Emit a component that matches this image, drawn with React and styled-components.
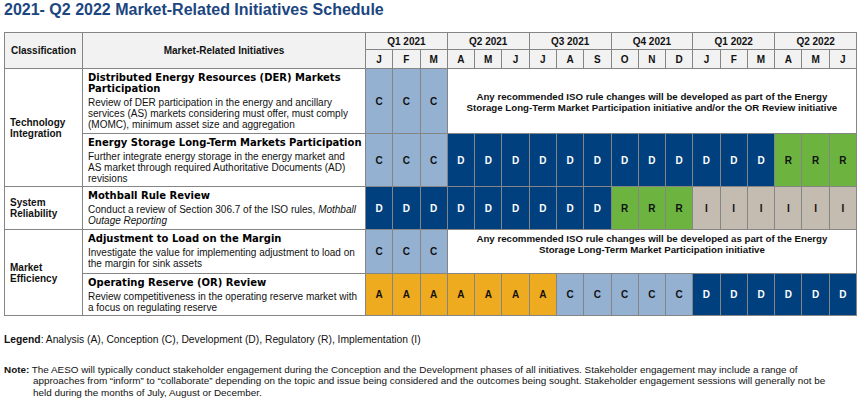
import React from 'react'
import styled, { createGlobalStyle } from 'styled-components'

const GlobalStyle = createGlobalStyle`
  body {
    margin: 0;
    background: #ffffff;
    font-family: "Liberation Sans", Arial, sans-serif;
    color: #111;
  }
`

const phaseColors = {
  A: { bg: '#efab1f', fg: '#111' },
  C: { bg: '#95b1d1', fg: '#111' },
  D: { bg: '#00407f', fg: '#ffffff' },
  R: { bg: '#6cb43f', fg: '#111' },
  I: { bg: '#c4bbb1', fg: '#111' },
}

const quarters = ['Q1 2021', 'Q2 2021', 'Q3 2021', 'Q4 2021', 'Q1 2022', 'Q2 2022']
const months = ['J', 'F', 'M', 'A', 'M', 'J', 'J', 'A', 'S', 'O', 'N', 'D', 'J', 'F', 'M', 'A', 'M', 'J']

const Page = styled.div`
  padding: 0 4px;
`

const Title = styled.h1`
  margin: 0;
  height: 32px;
  font-size: 16px;
  line-height: 20px;
  font-weight: 700;
  color: #1c4680;
`

const Grid = styled.div`
  display: grid;
  width: 853px;
  box-sizing: border-box;
  grid-template-columns: 77px 282px repeat(18, 1fr);
  grid-template-rows: 16px 18px 64px 52px 42px 43px 41px;
  gap: 1px;
  padding: 1px;
  background: #858585;
`

const HeadCell = styled.div`
  grid-row: span ${p => p.$rows || 1};
  grid-column: span ${p => p.$cols || 1};
  background: #f2f2f2;
  font-size: 10px;
  font-weight: 700;
  display: flex;
  align-items: center;
  justify-content: center;
`

const ClassCell = styled.div`
  grid-row: span ${p => p.$rows};
  background: #fff;
  font-size: 10px;
  font-weight: 700;
  line-height: 11px;
  padding-left: 5px;
  display: flex;
  flex-direction: column;
  justify-content: center;
`

const InitCell = styled.div`
  background: #fff;
  padding: 3px 0 0 5px;
  overflow: hidden;
`

const InitTitle = styled.div`
  font-family: "DejaVu Sans", "Liberation Sans", sans-serif;
  font-size: 10px;
  line-height: 11px;
  font-weight: 700;
  color: #000;
  margin-bottom: 3px;
  white-space: nowrap;
`

const InitText = styled.div`
  font-size: 10px;
  line-height: 11px;
  white-space: nowrap;
`

const PhaseCell = styled.div`
  background: ${p => phaseColors[p.$phase].bg};
  color: ${p => phaseColors[p.$phase].fg};
  font-size: 10px;
  font-weight: 700;
  display: flex;
  align-items: center;
  justify-content: center;
`

const NoteCell = styled.div`
  grid-column: span 15;
  background: #fff;
  font-size: 9.7px;
  line-height: ${p => p.$lh}px;
  font-weight: 700;
  text-align: center;
  display: flex;
  flex-direction: column;
  justify-content: center;
  padding-top: ${p => p.$pt || 0}px;
  padding-bottom: ${p => p.$pb || 0}px;
`

const Footer = styled.div`
  font-size: 9.9px;
  line-height: 11.5px;
  color: #111;
  white-space: nowrap;
`

const Legend = styled.div`
  margin-top: 18px;
  font-size: 10.3px;
`

const NoteLine = styled.div`
  padding-left: ${p => (p.$indent ? 29 : 0)}px;
  margin-top: ${p => p.$mt || 0}px;
`

const rows = [
  {
    cls: ['Technology', 'Integration'],
    span: 2,
    title: ['Distributed Energy Resources (DER) Markets', 'Participation'],
    text: [
      'Review of DER participation in the energy and ancillary',
      'services (AS) markets considering must offer, must comply',
      '(MOMC), minimum asset size and aggregation',
    ],
    phases: 'CCC',
    note: [
      'Any recommended ISO rule changes will be developed as part of the Energy',
      'Storage Long-Term Market Participation initiative and/or the OR Review initiative',
    ],
    noteLh: 11,
    notePt: 2,
  },
  {
    title: ['Energy Storage Long-Term Markets Participation'],
    text: [
      'Further integrate energy storage in the energy market and',
      'AS market through required Authoritative Documents (AD)',
      'revisions',
    ],
    phases: 'CCCDDDDDDDDDDDDRRR',
  },
  {
    cls: ['System', 'Reliability'],
    span: 1,
    title: ['Mothball Rule Review'],
    text: [
      <>Conduct a review of Section 306.7 of the ISO rules, <i>Mothball</i></>,
      <i>Outage Reporting</i>,
    ],
    phases: 'DDDDDDDDDRRRIIIIII',
  },
  {
    cls: ['Market', 'Efficiency'],
    span: 2,
    title: ['Adjustment to Load on the Margin'],
    text: [
      'Investigate the value for implementing adjustment to load on',
      'the margin for sink assets',
    ],
    phases: 'CCC',
    note: [
      'Any recommended ISO rule changes will be developed as part of the Energy',
      'Storage Long-Term Market Participation initiative',
    ],
    noteLh: 10.5,
    notePb: 14,
  },
  {
    title: ['Operating Reserve (OR) Review'],
    text: [
      'Review competitiveness in the operating reserve market with',
      'a focus on regulating reserve',
    ],
    phases: 'AAAAAAACCCCCDDDDDD',
  },
]

export default function App() {
  return (
    <Page>
      <GlobalStyle />
      <Title>2021- Q2 2022 Market-Related Initiatives Schedule</Title>
      <Grid>
        <HeadCell $rows={2}>Classification</HeadCell>
        <HeadCell $rows={2}>Market-Related Initiatives</HeadCell>
        {quarters.map(q => (
          <HeadCell key={q} $cols={3}>{q}</HeadCell>
        ))}
        {months.map((m, i) => (
          <HeadCell key={i}>{m}</HeadCell>
        ))}
        {rows.map((r, i) => (
          <React.Fragment key={i}>
            {r.cls && (
              <ClassCell $rows={r.span}>
                {r.cls.map(w => <div key={w}>{w}</div>)}
              </ClassCell>
            )}
            <InitCell>
              <InitTitle>
                {r.title.map((t, k) => <div key={k}>{t}</div>)}
              </InitTitle>
              <InitText>
                {r.text.map((t, k) => <div key={k}>{t}</div>)}
              </InitText>
            </InitCell>
            {r.phases.split('').map((p, j) => (
              <PhaseCell key={j} $phase={p}>{p}</PhaseCell>
            ))}
            {r.note && (
              <NoteCell $lh={r.noteLh} $pt={r.notePt} $pb={r.notePb}>
                {r.note.map((t, k) => <div key={k}>{t}</div>)}
              </NoteCell>
            )}
          </React.Fragment>
        ))}
      </Grid>
      <Footer>
        <Legend>
          <b>Legend</b>: Analysis (A), Conception (C), Development (D), Regulatory (R), Implementation (I)
        </Legend>
        <NoteLine $mt={18}>
          <b>Note:</b> The AESO will typically conduct stakeholder engagement during the Conception and the Development phases of all initiatives. Stakeholder engagement may include a range of
        </NoteLine>
        <NoteLine $indent>
          approaches from “inform” to “collaborate” depending on the topic and issue being considered and the outcomes being sought. Stakeholder engagement sessions will generally not be
        </NoteLine>
        <NoteLine $indent>held during the months of July, August or December.</NoteLine>
      </Footer>
    </Page>
  )
}
